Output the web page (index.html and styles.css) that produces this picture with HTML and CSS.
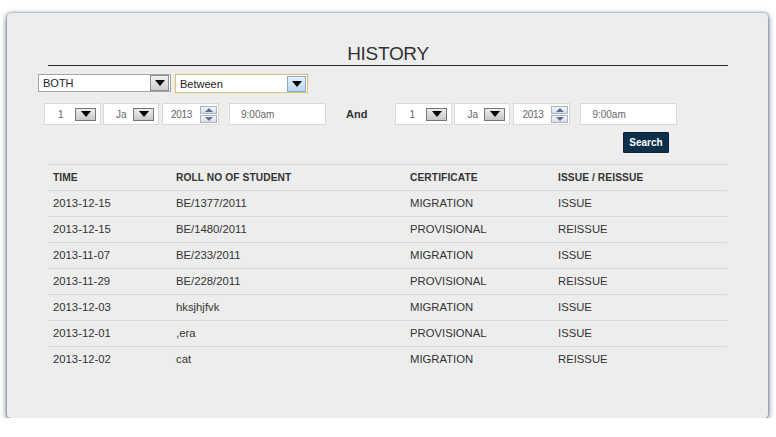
FILE: index.html
```html
<!DOCTYPE html>
<html>
<head>
<meta charset="utf-8">
<link rel="stylesheet" href="styles.css">
</head>
<body>
<div class="panel">
  <h1 class="title">HISTORY</h1>
  <div class="row1">
    <div class="sel sel-both"><span class="sel-text">BOTH</span><span class="arrow"><i class="tri"></i></span></div>
    <div class="sel sel-between"><span class="sel-text">Between</span><span class="arrow arrow-blue"><i class="tri"></i></span></div>
  </div>
  <div class="row2">
    <div class="group">
      <div class="box box-day"><span class="val">1</span><span class="darr"><i class="tri"></i></span></div>
      <div class="box box-mon"><span class="val">Ja</span><span class="darr"><i class="tri"></i></span></div>
      <div class="box box-year"><span class="val">2013</span><span class="spin"><span class="sp sp-up"><i class="up"></i></span><span class="sp sp-dn"><i class="dn"></i></span></span></div>
      <div class="box box-time"><span class="val">9:00am</span></div>
    </div>
    <span class="and">And</span>
    <div class="group">
      <div class="box box-day"><span class="val">1</span><span class="darr"><i class="tri"></i></span></div>
      <div class="box box-mon"><span class="val">Ja</span><span class="darr"><i class="tri"></i></span></div>
      <div class="box box-year"><span class="val">2013</span><span class="spin"><span class="sp sp-up"><i class="up"></i></span><span class="sp sp-dn"><i class="dn"></i></span></span></div>
      <div class="box box-time"><span class="val">9:00am</span></div>
    </div>
  </div>
  <div class="row3"><button class="search">Search</button></div>
  <table class="hist">
    <thead>
      <tr><th class="c1">TIME</th><th class="c2">ROLL NO OF STUDENT</th><th class="c3">CERTIFICATE</th><th class="c4">ISSUE / REISSUE</th></tr>
    </thead>
    <tbody>
      <tr><td>2013-12-15</td><td>BE/1377/2011</td><td>MIGRATION</td><td>ISSUE</td></tr>
      <tr><td>2013-12-15</td><td>BE/1480/2011</td><td>PROVISIONAL</td><td>REISSUE</td></tr>
      <tr><td>2013-11-07</td><td>BE/233/2011</td><td>MIGRATION</td><td>ISSUE</td></tr>
      <tr><td>2013-11-29</td><td>BE/228/2011</td><td>PROVISIONAL</td><td>REISSUE</td></tr>
      <tr><td>2013-12-03</td><td>hksjhjfvk</td><td>MIGRATION</td><td>ISSUE</td></tr>
      <tr><td>2013-12-01</td><td>,era</td><td>PROVISIONAL</td><td>ISSUE</td></tr>
      <tr><td>2013-12-02</td><td>cat</td><td>MIGRATION</td><td>REISSUE</td></tr>
    </tbody>
  </table>
</div>
</body>
</html>
```

FILE: styles.css
```css
html, body {
  margin: 0;
  padding: 0;
  background: #ffffff;
}
body {
  font-family: "Liberation Sans", Arial, sans-serif;
  color: #333;
}
.panel {
  box-sizing: border-box;
  width: 761px;
  height: 405px;
  margin: 13px 0 0 7px;
  background: #ededed;
  border-radius: 4px;
  box-shadow: 0 2px 6px rgba(45, 70, 92, 0.85), 0 0 2px rgba(45, 70, 92, 0.7);
  padding-top: 30px;
}
.title {
  margin: 0 40px 0 41px;
  font-size: 19px;
  line-height: 22px;
  font-weight: normal;
  text-align: center;
  color: #333;
  border-bottom: 1px solid #2a2a2a;
  letter-spacing: -0.3px;
}
.row1 {
  display: flex;
  gap: 4px;
  margin: 8px 0 0 31px;
}
.sel {
  box-sizing: border-box;
  display: flex;
  align-items: center;
  width: 133px;
  height: 18px;
  background: #fff;
  border: 1px solid #a5a5a5;
  font-size: 11px;
  color: #222;
}
.sel-between {
  width: 133px;
  height: 19px;
  border-color: #dcc07f;
  box-shadow: 0 0 1px #e8d29d;
}
.sel-text {
  flex: 1;
  padding-left: 4px;
}
.arrow {
  box-sizing: border-box;
  width: 19px;
  height: 16px;
  margin-right: 1px;
  border: 1px solid #8d8d8d;
  background: linear-gradient(#f2f2f2, #cfcfcf);
  display: flex;
  align-items: center;
  justify-content: center;
}
.arrow-blue {
  border-color: #8fa9c2;
  background: linear-gradient(#e8f3fc, #b7d7f0);
}
.tri {
  width: 0;
  height: 0;
  border-left: 5px solid transparent;
  border-right: 5px solid transparent;
  border-top: 6px solid #000;
}
.row2 {
  display: flex;
  align-items: center;
  margin: 10px 0 0 37px;
}
.group {
  display: flex;
  gap: 2px;
}
.box {
  box-sizing: border-box;
  height: 22px;
  background: #fff;
  border: 1px solid #dadada;
  display: flex;
  align-items: center;
  font-size: 10px;
  color: #666;
}
.box-day { width: 57px; }
.box-mon { width: 56px; }
.box-year { width: 57px; margin-left: 1px; }
.box-time { width: 97px; margin-left: 8px; }
.box-day .val { width: 30px; padding-left: 13px; box-sizing: border-box; }
.box-mon .val { width: 29px; padding-left: 12px; box-sizing: border-box; }
.box-year .val { width: 37px; padding-left: 8px; box-sizing: border-box; letter-spacing: -0.3px; }
.box-time .val { padding-left: 11px; }
.darr {
  box-sizing: border-box;
  width: 21px;
  height: 13px;
  border: 1px solid #777;
  background: linear-gradient(#ececec, #c8c8c8);
  display: flex;
  align-items: center;
  justify-content: center;
}
.spin {
  display: flex;
  flex-direction: column;
  gap: 1px;
}
.sp {
  box-sizing: border-box;
  width: 17px;
  height: 8px;
  border: 1px solid #a8b3c4;
  background: linear-gradient(#f4f6fa, #d6dce8);
  display: flex;
  align-items: center;
  justify-content: center;
}
.up {
  width: 0;
  height: 0;
  border-left: 4px solid transparent;
  border-right: 4px solid transparent;
  border-bottom: 4px solid #5d6f94;
}
.dn {
  width: 0;
  height: 0;
  border-left: 4px solid transparent;
  border-right: 4px solid transparent;
  border-top: 4px solid #5d6f94;
}
.and {
  font-size: 11px;
  font-weight: bold;
  color: #333;
  margin: 0 28px 0 20px;
}
.row3 {
  display: flex;
  justify-content: flex-end;
  margin: 7px 99px 0 0;
}
.search {
  width: 46px;
  height: 21px;
  padding: 0;
  border: 1px solid #0a2238;
  border-radius: 1px;
  background: #0e2f4c;
  color: #fff;
  font-family: "Liberation Sans", Arial, sans-serif;
  font-size: 10px;
  font-weight: bold;
}
.hist {
  margin: 11px 0 0 41px;
  width: 679px;
  border-collapse: collapse;
  font-size: 11.3px;
  color: #333;
}
.hist th, .hist td {
  box-sizing: border-box;
  height: 26px;
  padding: 0 0 1px 5px;
  text-align: left;
  border-top: 1px solid #d8d8d8;
}
.hist th {
  font-weight: bold;
  font-size: 10.2px;
  letter-spacing: 0.1px;
}
.c1 { width: 123px; }
.c2 { width: 234px; }
.c3 { width: 148px; }
```
